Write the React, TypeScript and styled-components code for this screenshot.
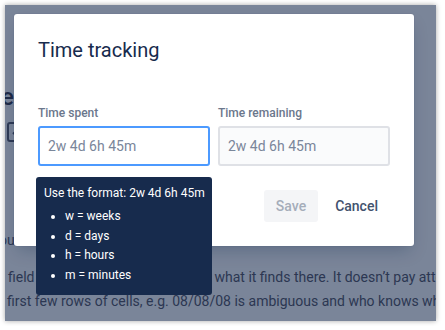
import React from "react";
import styled, { createGlobalStyle } from "styled-components";

const GlobalStyle = createGlobalStyle`
  html, body { margin: 0; padding: 0; background: #ffffff; }
  body { font-family: Roboto, "Noto Sans", sans-serif; }
  * { box-sizing: border-box; }
`;

const Screen = styled.div`
  position: relative;
  margin: 5px;
  width: 431px;
  height: 316px;
  overflow: hidden;
  background: #7a8599;
  box-shadow: 0 0 5px rgba(0, 0, 0, 0.35);
`;

const Backdrop = styled.div`
  display: flex;
  flex-direction: column;
  padding-top: 78px;
  color: #2c3752;
  font-size: 14px;
  white-space: nowrap;
`;

const PageHeading = styled.div`
  font-size: 24px;
  line-height: 28px;
  font-weight: 500;
  color: #1e2a47;
  margin-left: -4px;
`;

const CheckBox = styled.div`
  margin: 11px 0 0 2px;
  width: 20px;
  height: 20px;
  border: 2px solid #2f3a55;
  border-radius: 3px;
  display: flex;
  align-items: center;
  justify-content: center;
`;

const TextLine = styled.div<{ $indent: number; $gap?: number }>`
  line-height: 24px;
  margin-left: ${(p) => p.$indent}px;
  margin-top: ${(p) => p.$gap ?? 0}px;
`;

const Hidden = styled.span<{ $w: number }>`
  display: inline-block;
  width: ${(p) => p.$w}px;
`;

const Modal = styled.div`
  position: absolute;
  left: 9px;
  top: 9px;
  width: 400px;
  background: #ffffff;
  border-radius: 3px;
  padding: 24px;
  box-shadow: 0 0 1px rgba(9, 30, 66, 0.31), 0 8px 16px -4px rgba(9, 30, 66, 0.25);
`;

const Title = styled.h1`
  margin: 0;
  font-size: 20px;
  line-height: 24px;
  font-weight: 400;
  color: #172b4d;
`;

const Fields = styled.div`
  margin-top: 43px;
  display: grid;
  grid-template-columns: 1fr 1fr;
  column-gap: 8px;
`;

const Field = styled.div`
  position: relative;
  display: flex;
  flex-direction: column;
`;

const Label = styled.label`
  font-size: 12px;
  line-height: 16px;
  font-weight: 500;
  color: #6b778c;
  margin-bottom: 5px;
`;

const Input = styled.div<{ $focused?: boolean }>`
  height: 40px;
  border-radius: 3px;
  border: 2px solid ${(p) => (p.$focused ? "#4c9aff" : "#dfe1e6")};
  background: ${(p) => (p.$focused ? "#ffffff" : "#fafbfc")};
  display: flex;
  align-items: center;
  padding: 0 8px;
  font-size: 14px;
  color: #7a869a;
`;

const Tip = styled.div`
  position: absolute;
  left: -2px;
  top: calc(100% + 11px);
  width: 176px;
  min-height: 118px;
  background: #172b4d;
  border-radius: 3px;
  padding: 8px 8px 10px;
  color: #ffffff;
  font-size: 12px;
  line-height: 16px;
  white-space: nowrap;
  z-index: 2;
`;

const TipList = styled.ul`
  margin: 6px 0 0;
  padding-left: 21px;
`;

const TipItem = styled.li`
  line-height: 19.5px;
`;

const Footer = styled.div`
  margin-top: 24px;
  display: flex;
  justify-content: flex-end;
  gap: 5px;
`;

const Button = styled.button<{ $disabled?: boolean }>`
  height: 32px;
  padding: 0 12px;
  border: none;
  border-radius: 3px;
  font-family: inherit;
  font-size: 14px;
  font-weight: 500;
  background: ${(p) => (p.$disabled ? "#f4f5f7" : "transparent")};
  color: ${(p) => (p.$disabled ? "#a5adba" : "#42526e")};
`;

export default function App() {
  return (
    <>
      <GlobalStyle />
      <Screen>
        <Backdrop>
          <PageHeading>e</PageHeading>
          <CheckBox>
            <svg width="12" height="12" viewBox="0 0 12 12">
              <path d="M2 6.5l2.5 2.5L10 3.5" fill="none" stroke="#2f3a55" strokeWidth="2" />
            </svg>
          </CheckBox>
          <TextLine $indent={-14} $gap={86}>You</TextLine>
          <TextLine $indent={3} $gap={13}>
            field<Hidden $w={180} />what it finds there. It doesn’t pay attention
          </TextLine>
          <TextLine $indent={2}>
            first few rows of cells, e.g. 08/08/08 is ambiguous and who knows which
          </TextLine>
        </Backdrop>
        <Modal>
          <Title>Time tracking</Title>
          <Fields>
            <Field>
              <Label>Time spent</Label>
              <Input $focused>2w 4d 6h 45m</Input>
              <Tip>
                Use the format: 2w 4d 6h 45m
                <TipList>
                  <TipItem>w = weeks</TipItem>
                  <TipItem>d = days</TipItem>
                  <TipItem>h = hours</TipItem>
                  <TipItem>m = minutes</TipItem>
                </TipList>
              </Tip>
            </Field>
            <Field>
              <Label>Time remaining</Label>
              <Input>2w 4d 6h 45m</Input>
            </Field>
          </Fields>
          <Footer>
            <Button $disabled>Save</Button>
            <Button>Cancel</Button>
          </Footer>
        </Modal>
      </Screen>
    </>
  );
}
